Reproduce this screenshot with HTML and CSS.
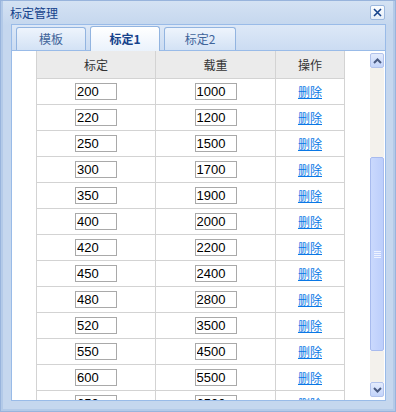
FILE: index.html
```html
<!DOCTYPE html>
<html lang="zh-CN">
<head>
<meta charset="utf-8">
<title>标定管理</title>
<link rel="stylesheet" href="styles.css">
</head>
<body>
<div class="win">
  <div class="win-head">
    <span class="win-title">标定管理</span>
    <span class="win-close"><svg width="13" height="13" viewBox="0 0 13 13"><path d="M3 3 L10 10 M10 3 L3 10" stroke="#15428b" stroke-width="1.6" fill="none"/></svg></span>
  </div>
  <div class="panel">
    <div class="tabstrip">
      <div class="tab">模板</div>
      <div class="tab active">标定1</div>
      <div class="tab wide">标定2</div>
    </div>
    <div class="panel-body">
      <div class="grid-wrap">
        <div class="grid">
          <div class="hd">标定</div><div class="hd">载重</div><div class="hd">操作</div>
          <div class="cell"><input class="num" value="200"></div><div class="cell"><input class="num" value="1000"></div><div class="cell"><a class="del" href="#">删除</a></div>
          <div class="cell"><input class="num" value="220"></div><div class="cell"><input class="num" value="1200"></div><div class="cell"><a class="del" href="#">删除</a></div>
          <div class="cell"><input class="num" value="250"></div><div class="cell"><input class="num" value="1500"></div><div class="cell"><a class="del" href="#">删除</a></div>
          <div class="cell"><input class="num" value="300"></div><div class="cell"><input class="num" value="1700"></div><div class="cell"><a class="del" href="#">删除</a></div>
          <div class="cell"><input class="num" value="350"></div><div class="cell"><input class="num" value="1900"></div><div class="cell"><a class="del" href="#">删除</a></div>
          <div class="cell"><input class="num" value="400"></div><div class="cell"><input class="num" value="2000"></div><div class="cell"><a class="del" href="#">删除</a></div>
          <div class="cell"><input class="num" value="420"></div><div class="cell"><input class="num" value="2200"></div><div class="cell"><a class="del" href="#">删除</a></div>
          <div class="cell"><input class="num" value="450"></div><div class="cell"><input class="num" value="2400"></div><div class="cell"><a class="del" href="#">删除</a></div>
          <div class="cell"><input class="num" value="480"></div><div class="cell"><input class="num" value="2800"></div><div class="cell"><a class="del" href="#">删除</a></div>
          <div class="cell"><input class="num" value="520"></div><div class="cell"><input class="num" value="3500"></div><div class="cell"><a class="del" href="#">删除</a></div>
          <div class="cell"><input class="num" value="550"></div><div class="cell"><input class="num" value="4500"></div><div class="cell"><a class="del" href="#">删除</a></div>
          <div class="cell"><input class="num" value="600"></div><div class="cell"><input class="num" value="5500"></div><div class="cell"><a class="del" href="#">删除</a></div>
          <div class="cell"><input class="num" value="650"></div><div class="cell"><input class="num" value="6500"></div><div class="cell"><a class="del" href="#">删除</a></div>
        </div>
      </div>
      <div class="vscroll">
        <div class="sb-btn"><svg width="9" height="6" viewBox="0 0 9 6"><path d="M1 5 L4.5 1.5 L8 5" stroke="#4a5b82" stroke-width="2" fill="none"/></svg></div>
        <div class="sb-track top"></div>
        <div class="sb-thumb"><span class="grip"></span></div>
        <div class="sb-track bottom"></div>
        <div class="sb-btn"><svg width="9" height="6" viewBox="0 0 9 6"><path d="M1 1 L4.5 4.5 L8 1" stroke="#4a5b82" stroke-width="2" fill="none"/></svg></div>
      </div>
    </div>
  </div>
</div>
</body>
</html>
```

FILE: styles.css
```css
* { box-sizing: border-box; }
html, body { margin: 0; padding: 0; }
body {
  width: 396px;
  height: 412px;
  overflow: hidden;
  font-family: "Noto Sans CJK SC", "Liberation Sans", sans-serif;
}
.win {
  width: 396px;
  height: 412px;
  border: 1px solid #98b4dc;
  box-shadow: inset 2px 0 0 #b3cae8, inset -2px 0 0 #b3cae8, inset 0 -2px 0 #b3cae8;
  background: linear-gradient(#d4e2f3, #c5d7ee 24px, #c5d7ee);
  padding: 0 9px 10px 10px;
  display: flex;
  flex-direction: column;
}
.win-head {
  height: 23px;
  display: flex;
  align-items: center;
  justify-content: space-between;
  margin-left: -1px;
}
.win-title {
  font-size: 12px;
  color: #15428b;
  line-height: 14px;
}
.win-close {
  width: 15px;
  height: 15px;
  margin-right: 1px;
  border: 1px solid #9cb8de;
  border-radius: 2px;
  background: linear-gradient(#fbfdff, #e4edf8);
  display: flex;
  align-items: center;
  justify-content: center;
}
.win-close svg { display: block; }
.panel {
  flex: 1;
  border: 1px solid #99bbe8;
  background: #fff;
  display: flex;
  flex-direction: column;
  min-height: 0;
}
.tabstrip {
  height: 26px;
  flex: none;
  padding: 2px 0 0 4px;
  display: flex;
  align-items: flex-end;
  gap: 4px;
  background: linear-gradient(#dde8f7, #cbdcf2);
  border-bottom: 1px solid #99bbe8;
}
.tab {
  width: 70px;
  height: 23px;
  border: 1px solid #92b4e0;
  border-bottom: none;
  border-radius: 3px 3px 0 0;
  background: linear-gradient(#eef4fc, #d3e2f5);
  color: #3f649a;
  font-size: 12px;
  line-height: 21px;
  text-align: center;
}
.tab.wide { width: 72px; }
.tab.active {
  height: 25px;
  margin-bottom: -1px;
  background: linear-gradient(#ffffff, #eaf2fc);
  color: #15428b;
  font-weight: bold;
  line-height: 23px;
  position: relative;
}
.panel-body {
  flex: 1;
  display: flex;
  min-height: 0;
  overflow: hidden;
}
.grid-wrap {
  flex: 1;
  display: flex;
  justify-content: center;
  overflow: hidden;
}
.grid {
  width: 309px;
  display: grid;
  grid-template-columns: 119px 120px 69px;
  grid-auto-rows: 26px;
  align-content: start;
  border-left: 1px solid #d3d3d3;
}
.hd, .cell {
  border-right: 1px solid #d3d3d3;
  border-bottom: 1px solid #d3d3d3;
  display: flex;
  align-items: center;
  justify-content: center;
}
.hd {
  height: 28px;
  background: #ebebeb;
  color: #333;
  font-size: 12px;
}
.grid > .hd { grid-row: 1; }
.grid { grid-template-rows: 28px; }
.num {
  width: 42px;
  height: 17px;
  margin: 0;
  padding: 0 1px;
  border: 1px solid #a9a9a9;
  font-family: "Liberation Sans", Arial, sans-serif;
  font-size: 13px;
  color: #000;
  background: #fff;
  outline: none;
}
.del {
  color: #0a78e6;
  font-size: 12px;
  text-decoration: underline;
}
.vscroll {
  width: 16px;
  flex: none;
  padding: 2px 1px 3px 1px;
  display: flex;
  flex-direction: column;
  background: #fff;
}
.sb-btn {
  height: 15px;
  flex: none;
  border: 1px solid #b2c3ec;
  border-radius: 2px;
  background: linear-gradient(#e4ecfd, #c3d4fa);
  display: flex;
  align-items: center;
  justify-content: center;
}
.sb-btn svg { display: block; }
.sb-track { background: #f3f1ec; }
.sb-track.top { height: 89px; flex: none; }
.sb-track.bottom { flex: 1; }
.sb-thumb {
  height: 194px;
  flex: none;
  border: 1px solid #a8bbee;
  border-radius: 2px;
  background: linear-gradient(90deg, #cad9fd, #bccefb);
  display: flex;
  align-items: center;
  justify-content: center;
}
.grip {
  width: 7px;
  height: 7px;
  background: repeating-linear-gradient(#eef3ff 0 1px, transparent 1px 2px);
}
```
